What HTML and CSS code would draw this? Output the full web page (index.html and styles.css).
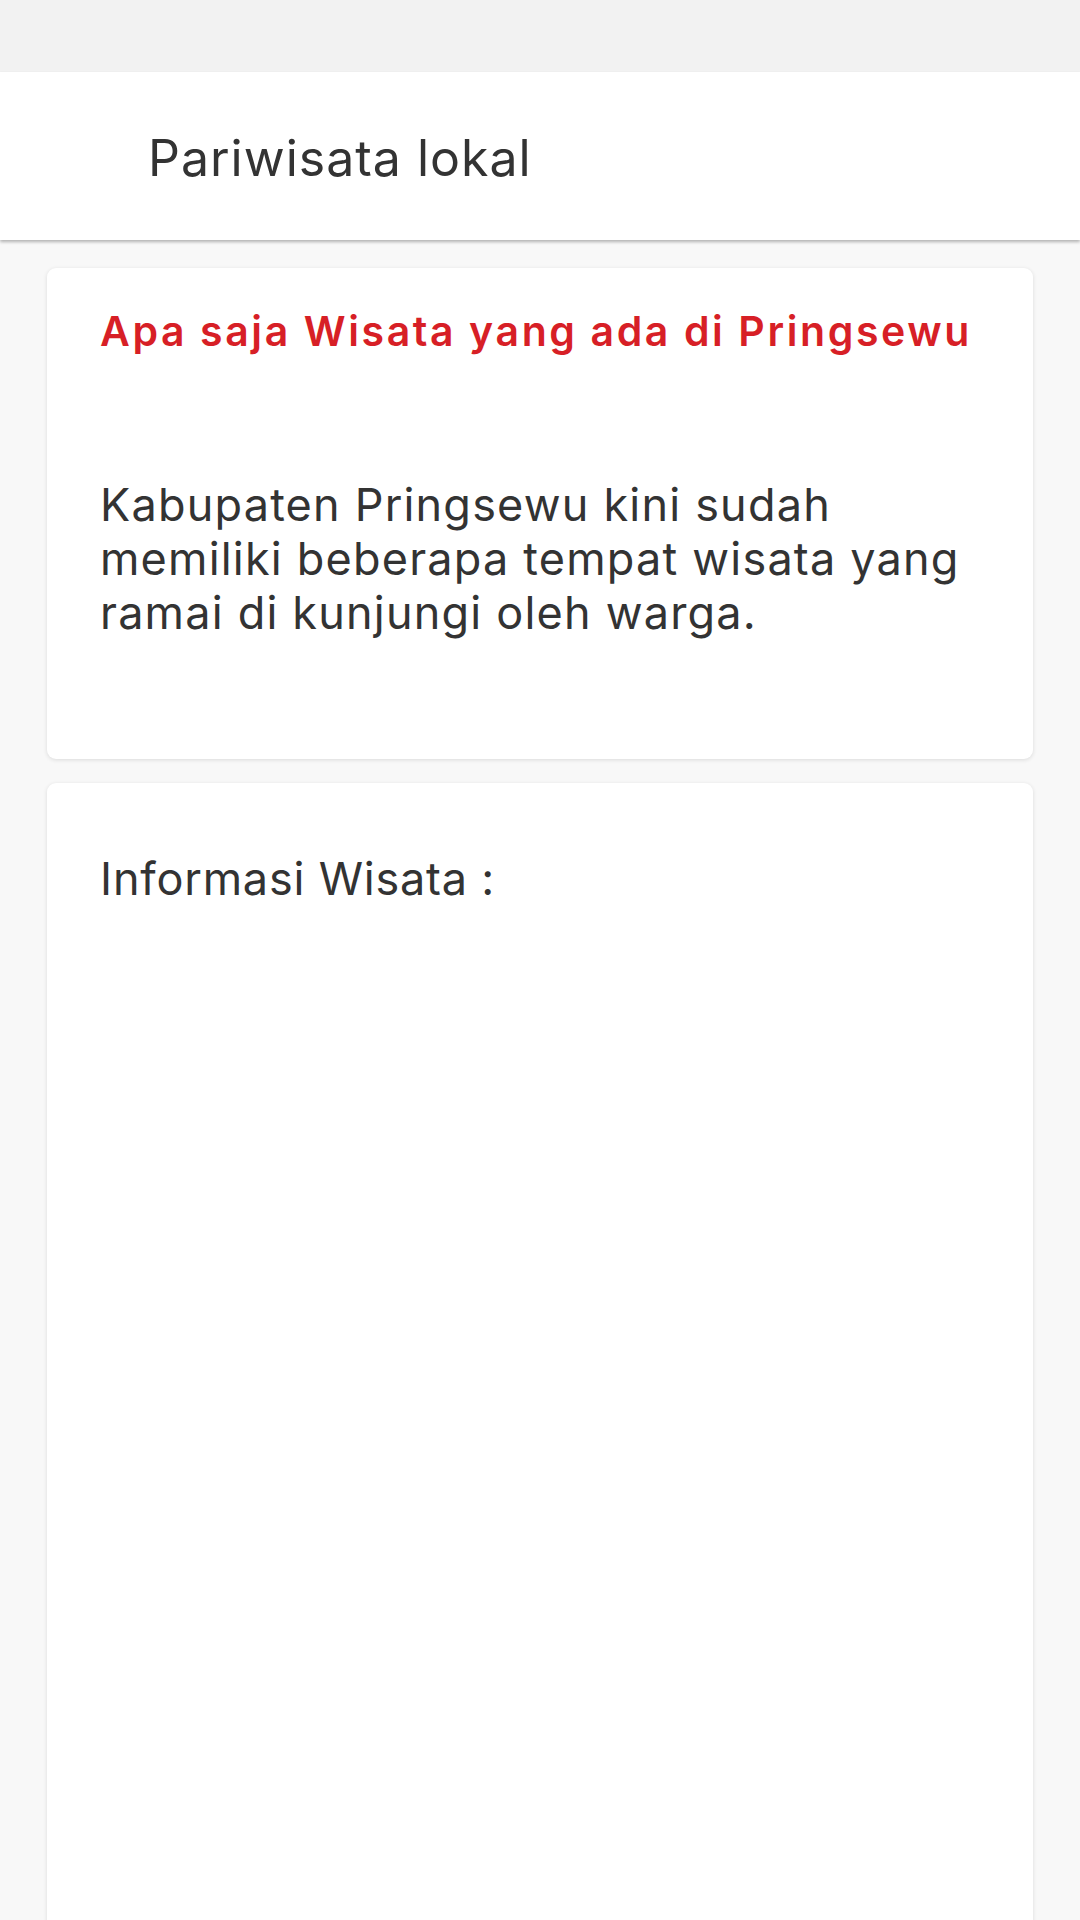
FILE: index.html
```html
<!DOCTYPE html>
<html lang="id">
<head>
<meta charset="utf-8">
<title>Pariwisata lokal</title>
<link rel="stylesheet" href="styles.css">
</head>
<body>
<div class="status-bar"></div>
<header class="app-bar">
  <h1 class="app-title">Pariwisata lokal</h1>
</header>
<main class="content">
  <section class="card card-intro">
    <h2 class="card-heading">Apa saja Wisata yang ada di Pringsewu</h2>
    <p class="card-body">Kabupaten Pringsewu kini sudah memiliki beberapa tempat wisata yang ramai di kunjungi oleh warga.</p>
  </section>
  <section class="card card-info">
    <p class="card-body">Informasi Wisata :</p>
  </section>
</main>
</body>
</html>
```

FILE: styles.css
```css
html, body {
  margin: 0;
  padding: 0;
}
body {
  width: 1080px;
  height: 1920px;
  overflow: hidden;
  background: #f8f8f8;
  font-family: Inter, "Open Sans", sans-serif;
  color: #333333;
}
.status-bar {
  height: 72px;
  background: #f2f2f2;
}
.app-bar {
  height: 168px;
  background: #ffffff;
  display: flex;
  align-items: center;
  padding-left: 148px;
  padding-top: 4px;
  box-sizing: border-box;
  box-shadow: 0 2px 3px rgba(0,0,0,0.28);
  position: relative;
  z-index: 1;
}
.app-title {
  margin: 0;
  font-size: 50px;
  font-weight: 400;
  line-height: 60px;
  letter-spacing: 1px;
  color: #333333;
}
.content {
  padding: 28px 47px 0;
  display: flex;
  flex-direction: column;
  gap: 24px;
}
.card {
  background: #ffffff;
  border-radius: 9px;
  box-shadow: 0 1px 4px rgba(0,0,0,0.12);
  padding: 0 53px;
}
.card-intro {
  padding-top: 37px;
  padding-bottom: 119px;
}
.card-heading {
  margin: 0;
  font-size: 41px;
  font-weight: 600;
  line-height: 52px;
  letter-spacing: 2.6px;
  color: #d71f26;
}
.card-body {
  margin: 0;
  font-size: 45px;
  font-weight: 400;
  line-height: 54px;
  letter-spacing: 1.2px;
  color: #333333;
}
.card-intro .card-body {
  margin-top: 121px;
}
.card-info {
  padding-top: 69px;
  min-height: 1200px;
}
.card-info .card-body {
  letter-spacing: 0.8px;
}
```
